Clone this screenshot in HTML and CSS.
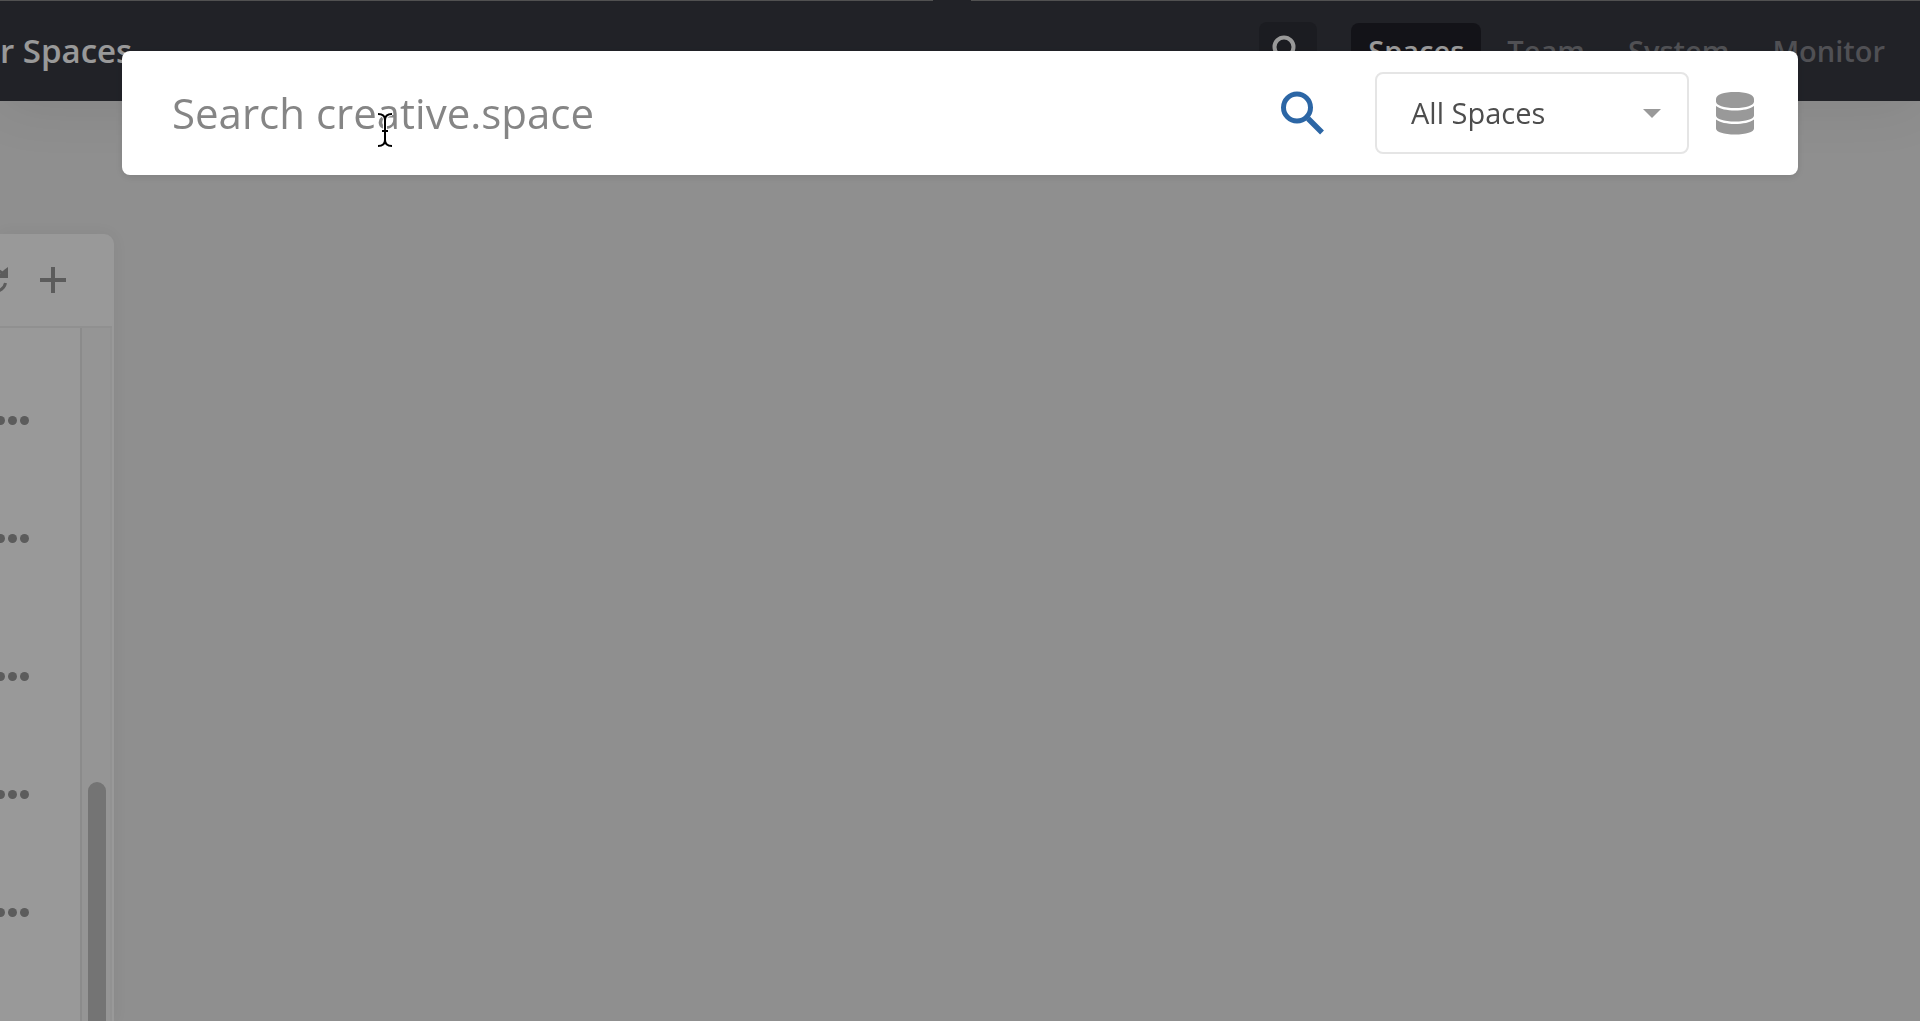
FILE: index.html
```html
<!DOCTYPE html>
<html lang="en">
<head>
<meta charset="utf-8">
<title>creative.space</title>
<link rel="stylesheet" href="styles.css">
</head>
<body>
<header class="topbar">
  <div class="window-edge"><span></span><span></span></div>
  <h1 class="title">r Spaces</h1>
  <button class="find" type="button" aria-label="Search">
    <svg viewBox="0 0 36 36" width="36" height="36"><circle cx="14" cy="14" r="9.5" fill="none" stroke="currentColor" stroke-width="4"/><path d="M20 20 31 31" stroke="currentColor" stroke-width="5"/></svg>
  </button>
  <nav class="nav">
    <a class="nav-link active" href="#">Spaces</a>
    <a class="nav-link" href="#">Team</a>
    <a class="nav-link" href="#">System</a>
    <a class="nav-link" href="#">Monitor</a>
  </nav>
</header>
<main class="content">
  <section class="panel">
    <div class="tools">
      <button class="tool refresh" type="button" aria-label="Refresh">
        <svg viewBox="0 0 26 26" width="26" height="26"><path d="M22.500 9A10.500 10.500 0 1 0 23.500 16" fill="none" stroke="currentColor" stroke-width="3"/><path d="M26 0V11H14L18 7L22 3Z" fill="currentColor"/></svg>
      </button>
      <button class="tool" type="button" aria-label="Add">
        <svg viewBox="0 0 26 26" width="26" height="26"><path d="M13 0V26M0 13H26" stroke="currentColor" stroke-width="4"/></svg>
      </button>
    </div>
    <div class="body">
      <div class="rows">
        <div class="group">
          <button class="more" type="button" aria-label="More"><i></i><i></i><i></i></button>
          <button class="more" type="button" aria-label="More"><i></i><i></i><i></i></button>
        </div>
        <div class="group">
          <button class="more" type="button" aria-label="More"><i></i><i></i><i></i></button>
          <button class="more" type="button" aria-label="More"><i></i><i></i><i></i></button>
          <button class="more" type="button" aria-label="More"><i></i><i></i><i></i></button>
        </div>
      </div>
      <div class="track"><div class="thumb"></div></div>
    </div>
  </section>
</main>
<div class="overlay">
  <form class="search">
    <input class="query" type="text" placeholder="Search creative.space" aria-label="Search creative.space">
    <button class="go" type="button" aria-label="Search">
      <svg viewBox="0 0 44 44" width="44" height="44"><circle cx="16" cy="16.500" r="13.500" fill="none" stroke="currentColor" stroke-width="5"/><path d="M27 27.500 41 41.500" stroke="currentColor" stroke-width="5.500"/></svg>
    </button>
    <div class="picker">
      <select class="scope" aria-label="Space"><option>All Spaces</option></select>
      <svg class="caret" viewBox="0 0 18 9" width="18" height="9"><path d="M0 0H18L9 9Z" fill="currentColor"/></svg>
    </div>
    <button class="storage" type="button" aria-label="Storage">
      <svg viewBox="0 0 38 44" width="38" height="44" fill="currentColor"><path d="M0 8C0 3.500 8 1 19 1S38 3.500 38 8V10.500C38 14.500 30 17 19 17S0 14.500 0 10.500Z"/><path d="M0 15C4 18 11 19.500 19 19.500S34 18 38 15V24.500C38 28 30 30.500 19 30.500S0 28 0 24.500Z"/><path d="M0 28.500C4 31.500 11 33 19 33S34 31.500 38 28.500V37.500C38 41 30 43.500 19 43.500S0 41 0 37.500Z"/></svg>
    </button>
  </form>
  <svg class="ibeam" viewBox="0 0 16 36" width="16" height="36" fill="none"><path d="M1 2Q8 2 8 8V28Q8 34 1 34M15 2Q8 2 8 8M8 28Q8 34 15 34M5 19H11" stroke="#fff" stroke-width="4"/><path d="M1 2Q8 2 8 8V28Q8 34 1 34M15 2Q8 2 8 8M8 28Q8 34 15 34M5 19H11" stroke="#000" stroke-width="2"/></svg>
</div>
</body>
</html>
```

FILE: styles.css
```css
* { box-sizing: border-box; }
body {
  margin: 0;
  height: 100vh;
  display: flex;
  flex-direction: column;
  overflow: hidden;
  background: #eee;
  font-family: "Open Sans", "Noto Sans", sans-serif;
}
button {
  padding: 0;
  border: 0;
  background: none;
  color: inherit;
  font: inherit;
}
svg { display: block; }
.topbar {
  position: relative;
  flex: none;
  height: 101px;
  padding-right: 18px;
  display: flex;
  align-items: center;
  background: #373942;
  box-shadow: 0 4px 60px rgba(0, 0, 0, .08);
}
.window-edge {
  position: absolute;
  inset: 0 0 auto;
  display: flex;
  gap: 38px;
}
.window-edge span {
  flex: 933 1 0;
  height: 1px;
  background: #888;
}
.window-edge span + span { flex-grow: 949; }
.title {
  margin: 0 auto 0 0;
  color: #fff;
  font-size: 33px;
  font-weight: 600;
  line-height: 48px;
}
.find {
  display: flex;
  align-items: center;
  justify-content: center;
  width: 58px;
  height: 58px;
  margin-right: 34px;
  border-radius: 8px;
  background: #2e2f37;
  color: #fff;
}
.nav {
  display: flex;
  gap: 9px;
}
.nav-link {
  height: 56px;
  padding: 0 17px;
  border-radius: 8px;
  color: #85868c;
  font-size: 29px;
  font-weight: 600;
  line-height: 56px;
  text-decoration: none;
}
.nav-link.active {
  background: #212028;
  color: #fff;
}
.content {
  flex: 1;
  min-height: 0;
  padding-top: 133px;
  display: flex;
}
.panel {
  width: 114px;
  display: flex;
  flex-direction: column;
  border-top-right-radius: 10px;
  background: #fff;
  box-shadow: 0 0 16px rgba(0, 0, 0, .05);
}
.tools {
  flex: none;
  height: 94px;
  margin-right: 2px;
  padding-right: 46px;
  display: flex;
  align-items: center;
  justify-content: flex-end;
  gap: 32px;
  border-bottom: 2px solid #f0f0f0;
  color: #999;
}
.tool { flex: none; }
.body {
  flex: 1;
  margin-right: 2px;
  display: flex;
}
.rows {
  flex: 1;
  padding-top: 33px;
  display: flex;
  flex-direction: column;
  gap: 20px;
}
.group {
  display: flex;
  flex-direction: column;
}
.more {
  width: 29px;
  height: 118px;
  display: flex;
  align-items: center;
  justify-content: flex-end;
  gap: 3px;
}
.more i {
  flex: none;
  width: 9px;
  height: 9px;
  border-radius: 50%;
  background: #999;
}
.track {
  width: 32px;
  padding-left: 6px;
  display: flex;
  align-items: flex-end;
  border: solid #e8e8e8;
  border-width: 0 2px;
  border-right-color: #f3f3f3;
  background: #f9f9f9;
}
.thumb {
  width: 18px;
  height: 239px;
  border-radius: 9px 9px 0 0;
  background: #c1c1c1;
}
.overlay {
  position: fixed;
  inset: 0;
  padding: 51px 122px;
  background: rgba(0, 0, 0, .4);
}
.search {
  height: 124px;
  padding: 0 44px 0 50px;
  display: flex;
  align-items: center;
  border-radius: 8px;
  background: #fff;
  box-shadow: 0 2px 8px rgba(0, 0, 0, .1);
}
.query {
  flex: 1;
  min-width: 0;
  padding: 0;
  border: 0;
  outline: 0;
  background: none;
  font: 42px/58px "Open Sans", "Noto Sans", sans-serif;
}
.query::placeholder { color: #858585; opacity: 1; }
.go { margin-right: 50px; color: #2c66a5; }
.picker {
  position: relative;
  margin-right: 27px;
}
.scope {
  appearance: none;
  width: 314px;
  height: 82px;
  padding: 0 34px;
  border: 2px solid #e5e5e5;
  border-radius: 8px;
  background: #fff;
  color: #4d4d4d;
  font: 29px/42px "Open Sans", "Noto Sans", sans-serif;
}
.caret {
  position: absolute;
  right: 28px;
  top: 37px;
  color: #999;
  pointer-events: none;
}
.storage { color: #999; }
.ibeam {
  position: absolute;
  left: 377px;
  top: 112px;
}
```
